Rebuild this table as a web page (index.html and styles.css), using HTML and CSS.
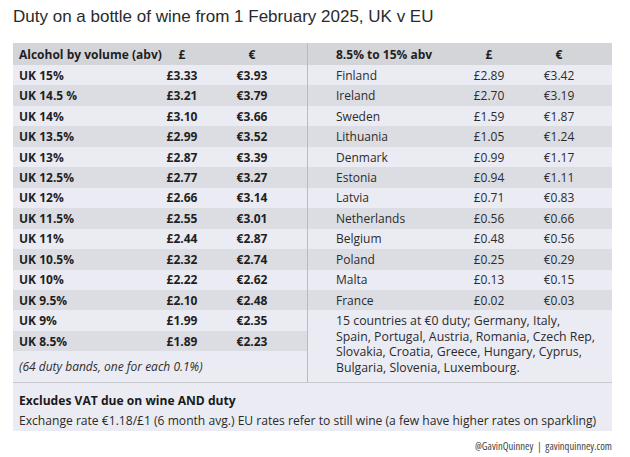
FILE: index.html
```html
<!DOCTYPE html>
<html lang="en">
<head>
<meta charset="utf-8">
<title>Duty on a bottle of wine</title>
<link rel="stylesheet" href="styles.css">
</head>
<body>
<h1 class="title">Duty on a bottle of wine from 1 February 2025, UK v EU</h1>
<div class="card">
  <div class="panels">
    <div class="panel panel-uk">
      <div class="row head"><span class="lbl">Alcohol by volume (abv)</span><span class="num">£</span><span class="num">€</span></div>
      <div class="row odd"><span class="lbl">UK 15%</span><span class="num">£3.33</span><span class="num">€3.93</span></div>
      <div class="row even"><span class="lbl">UK 14.5 %</span><span class="num">£3.21</span><span class="num">€3.79</span></div>
      <div class="row odd"><span class="lbl">UK 14%</span><span class="num">£3.10</span><span class="num">€3.66</span></div>
      <div class="row even"><span class="lbl">UK 13.5%</span><span class="num">£2.99</span><span class="num">€3.52</span></div>
      <div class="row odd"><span class="lbl">UK 13%</span><span class="num">£2.87</span><span class="num">€3.39</span></div>
      <div class="row even"><span class="lbl">UK 12.5%</span><span class="num">£2.77</span><span class="num">€3.27</span></div>
      <div class="row odd"><span class="lbl">UK 12%</span><span class="num">£2.66</span><span class="num">€3.14</span></div>
      <div class="row even"><span class="lbl">UK 11.5%</span><span class="num">£2.55</span><span class="num">€3.01</span></div>
      <div class="row odd"><span class="lbl">UK 11%</span><span class="num">£2.44</span><span class="num">€2.87</span></div>
      <div class="row even"><span class="lbl">UK 10.5%</span><span class="num">£2.32</span><span class="num">€2.74</span></div>
      <div class="row odd"><span class="lbl">UK 10%</span><span class="num">£2.22</span><span class="num">€2.62</span></div>
      <div class="row even"><span class="lbl">UK 9.5%</span><span class="num">£2.10</span><span class="num">€2.48</span></div>
      <div class="row odd"><span class="lbl">UK 9%</span><span class="num">£1.99</span><span class="num">€2.35</span></div>
      <div class="row even"><span class="lbl">UK 8.5%</span><span class="num">£1.89</span><span class="num">€2.23</span></div>
      <div class="note note-uk">(64 duty bands, one for each 0.1%)</div>
    </div>
    <div class="panel panel-eu">
      <div class="row head"><span class="lbl">8.5% to 15% abv</span><span class="num">£</span><span class="num">€</span></div>
      <div class="row odd"><span class="lbl">Finland</span><span class="num">£2.89</span><span class="num">€3.42</span></div>
      <div class="row even"><span class="lbl">Ireland</span><span class="num">£2.70</span><span class="num">€3.19</span></div>
      <div class="row odd"><span class="lbl">Sweden</span><span class="num">£1.59</span><span class="num">€1.87</span></div>
      <div class="row even"><span class="lbl">Lithuania</span><span class="num">£1.05</span><span class="num">€1.24</span></div>
      <div class="row odd"><span class="lbl">Denmark</span><span class="num">£0.99</span><span class="num">€1.17</span></div>
      <div class="row even"><span class="lbl">Estonia</span><span class="num">£0.94</span><span class="num">€1.11</span></div>
      <div class="row odd"><span class="lbl">Latvia</span><span class="num">£0.71</span><span class="num">€0.83</span></div>
      <div class="row even"><span class="lbl">Netherlands</span><span class="num">£0.56</span><span class="num">€0.66</span></div>
      <div class="row odd"><span class="lbl">Belgium</span><span class="num">£0.48</span><span class="num">€0.56</span></div>
      <div class="row even"><span class="lbl">Poland</span><span class="num">£0.25</span><span class="num">€0.29</span></div>
      <div class="row odd"><span class="lbl">Malta</span><span class="num">£0.13</span><span class="num">€0.15</span></div>
      <div class="row even"><span class="lbl">France</span><span class="num">£0.02</span><span class="num">€0.03</span></div>
      <div class="note note-eu">15 countries at €0 duty; Germany, Italy, Spain, Portugal, Austria, Romania, Czech Rep, Slovakia, Croatia, Greece, Hungary, Cyprus, Bulgaria, Slovenia, Luxembourg.</div>
    </div>
  </div>
  <div class="footer">
    <div class="footer-strong">Excludes VAT due on wine AND duty</div>
    <div class="footer-text">Exchange rate €1.18/£1 (6 month avg.) EU rates refer to still wine (a few have higher rates on sparkling)</div>
  </div>
</div>
<div class="credit">@GavinQuinney&nbsp; | &nbsp;gavinquinney.com</div>
</body>
</html>
```

FILE: styles.css
```css
html, body {
  margin: 0;
  padding: 0;
  background: #ffffff;
}

body {
  width: 630px;
  height: 457px;
  padding: 0 18px 0 13px;
  box-sizing: border-box;
  font-family: "Open Sans", "DejaVu Sans", sans-serif;
  color: #1f1f1f;
  overflow: hidden;
}

.title {
  margin: 0;
  height: 43px;
  line-height: 34px;
  font-family: "Liberation Sans", Arial, sans-serif;
  font-weight: normal;
  font-size: 17px;
  color: #2a2a2a;
}

.card {
  width: 599px;
  background: #ebebf3;
}

.panels {
  display: grid;
  grid-template-columns: 295px 1fr;
}

.panel-uk {
  border-right: 1px solid #b9bbc2;
}

.row {
  display: grid;
  align-items: center;
  height: 20.46px;
  font-size: 12px;
}

.panel-uk .row {
  grid-template-columns: 134px 70px 70px 1fr;
  font-weight: 700;
}

.panel-eu .row {
  grid-template-columns: 146px 70px 70px 1fr;
  font-weight: 400;
  color: #2b2b2b;
}

.row.head {
  height: 22px;
  background: #d4d5d9;
  font-weight: 700;
  color: #1f1f1f;
}

.row.odd {
  background: #ebebf3;
}

.row.even {
  background: #dcdde2;
}

.lbl {
  white-space: nowrap;
}

.panel-uk .lbl {
  padding-left: 6px;
}

.panel-eu .lbl {
  padding-left: 28px;
}

.num {
  text-align: center;
}

.note {
  font-size: 12px;
  background: #ebebf3;
}

.note-uk {
  height: 31px;
  line-height: 31px;
  padding-left: 6px;
  font-style: italic;
  color: #2f2f2f;
}

.note-eu {
  padding: 3px 14px 0 28px;
  font-size: 12.3px;
  line-height: 15.4px;
  color: #2b2b2b;
}

.footer {
  border-top: 1px solid #c8c9cf;
  padding: 8px 6px 1px 6px;
  height: 49px;
  box-sizing: border-box;
  font-size: 12.1px;
  line-height: 20px;
}

.footer-strong {
  font-weight: 700;
  color: #1a1a1a;
}

.footer-text {
  color: #2b2b2b;
}

.credit {
  width: 599px;
  margin-top: 8px;
  text-align: right;
  font-family: "Liberation Sans Narrow", "Open Sans", sans-serif;
  font-stretch: condensed;
  font-size: 10.6px;
  color: #444444;
}
```
